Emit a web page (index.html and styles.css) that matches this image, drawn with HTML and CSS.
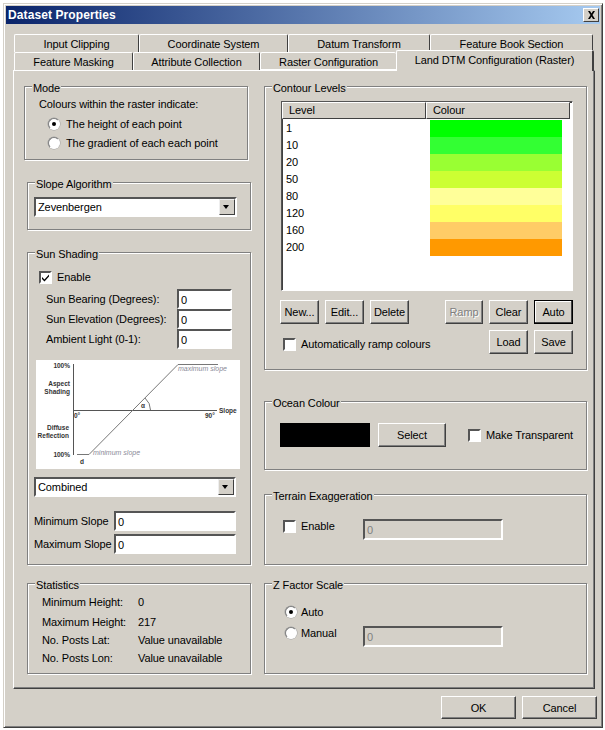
FILE: index.html
```html
<!DOCTYPE html>
<html>
<head>
    <meta name="viewport" content="width=device-width, initial-scale=1.0">
    <title>Dataset Properties</title>
    <link rel="stylesheet" href="styles.css">
</head>
<body>
    <div class="window">
        <!-- Title bar -->
        <div class="titlebar">
            <span class="title">Dataset Properties</span>
            <span class="close-btn">
                <svg width="9" height="8" viewBox="0 0 9 8"><path d="M1 0h2l1.500 2.500L6 0h2L5.500 4 8 8H6L4.500 5.500 3 8H1l2.500-4z" fill="#000"/></svg>
            </span>
        </div>

        <!-- Tabs -->
        <div class="tabs">
            <div class="tab-row">
                <div class="tab t1">Input Clipping</div>
                <div class="tab t2">Coordinate System</div>
                <div class="tab t3">Datum Transform</div>
                <div class="tab t4">Feature Book Section</div>
            </div>
            <div class="tab-row">
                <div class="tab t5">Feature Masking</div>
                <div class="tab t6">Attribute Collection</div>
                <div class="tab t7">Raster Configuration</div>
                <div class="tab active-tab">Land DTM Configuration (Raster)</div>
            </div>
        </div>

        <div class="panel">
            <div class="col col-left">
                <fieldset class="group mode-group">
                    <legend>Mode</legend>
                    <p class="mode-caption">Colours within the raster indicate:</p>
                    <label class="option mode-option"><span class="radio checked"></span>The height of each point</label>
                    <label class="option mode-option"><span class="radio"></span>The gradient of each each point</label>
                </fieldset>

                <fieldset class="group slope-group">
                    <legend>Slope Algorithm</legend>
                    <div class="select">
                        <span class="select-value">Zevenbergen</span>
                        <span class="select-arrow"></span>
                    </div>
                </fieldset>

                <fieldset class="group sun-group">
                    <legend>Sun Shading</legend>
                    <label class="option sun-enable"><span class="check checked">
                        <svg width="9" height="9" viewBox="0 0 9 9"><path d="M1 4l2.500 2.500L8 1.500v2L3.500 8.500 1 6z" fill="#000"/></svg>
                    </span>Enable</label>
                    <div class="field-row"><span class="field-label">Sun Bearing (Degrees):</span><span class="input small">0</span></div>
                    <div class="field-row"><span class="field-label">Sun Elevation (Degrees):</span><span class="input small">0</span></div>
                    <div class="field-row"><span class="field-label">Ambient Light (0-1):</span><span class="input small">0</span></div>

                    <svg class="chart" width="204" height="109" viewBox="0 0 204 109">
                        <rect width="204" height="109" fill="#fff"/>
                        <path d="M37.500 4v91M37 50.500h144" stroke="#555" fill="none"/>
                        <path d="M41 94.500h12L142 4.500h40" stroke="#777" fill="none"/>
                        <path d="M109 38q5.500 5 5.500 12" stroke="#777" fill="none"/>
                        <g class="chart-label">
                            <text x="34" y="8" text-anchor="end">100%</text>
                            <text x="34" y="26" text-anchor="end">Aspect</text>
                            <text x="34" y="34" text-anchor="end">Shading</text>
                            <text x="38" y="58">0°</text>
                            <text x="169" y="58">90°</text>
                            <text x="183" y="53">Slope</text>
                            <text x="33" y="70" text-anchor="end">Diffuse</text>
                            <text x="33" y="78" text-anchor="end">Reflection</text>
                            <text x="34" y="97" text-anchor="end">100%</text>
                            <text x="44" y="104">d</text>
                            <text x="105" y="48">α</text>
                        </g>
                        <text class="chart-note" x="142" y="11">maximum slope</text>
                        <text class="chart-note" x="57" y="95">minimum slope</text>
                    </svg>

                    <div class="select combined">
                        <span class="select-value">Combined</span>
                        <span class="select-arrow"></span>
                    </div>
                    <div class="field-row slope-row"><span class="field-label">Minimum Slope</span><span class="input wide">0</span></div>
                    <div class="field-row slope-row"><span class="field-label">Maximum Slope</span><span class="input wide">0</span></div>
                </fieldset>

                <fieldset class="group stats-group">
                    <legend>Statistics</legend>
                    <div class="stat stat-first"><span class="stat-name">Minimum Height:</span><span>0</span></div>
                    <div class="stat"><span class="stat-name">Maximum Height:</span><span>217</span></div>
                    <div class="stat"><span class="stat-name">No. Posts Lat:</span><span>Value unavailable</span></div>
                    <div class="stat"><span class="stat-name">No. Posts Lon:</span><span>Value unavailable</span></div>
                </fieldset>
            </div>

            <div class="col col-right">
                <fieldset class="group contour-group">
                    <legend>Contour Levels</legend>
                    <div class="list">
                        <div class="list-head">
                            <span class="head-cell head-level">Level</span>
                            <span class="head-cell head-colour">Colour</span>
                        </div>
                        <div class="list-row"><span class="level">1</span><span class="swatch c1"></span></div>
                        <div class="list-row"><span class="level">10</span><span class="swatch c2"></span></div>
                        <div class="list-row"><span class="level">20</span><span class="swatch c3"></span></div>
                        <div class="list-row"><span class="level">50</span><span class="swatch c4"></span></div>
                        <div class="list-row"><span class="level">80</span><span class="swatch c5"></span></div>
                        <div class="list-row"><span class="level">120</span><span class="swatch c6"></span></div>
                        <div class="list-row"><span class="level">160</span><span class="swatch c7"></span></div>
                        <div class="list-row"><span class="level">200</span><span class="swatch c8"></span></div>
                    </div>
                    <div class="list-actions">
                        <div class="action-row">
                            <button class="btn">New...</button>
                            <button class="btn">Edit...</button>
                            <button class="btn">Delete</button>
                            <button class="btn disabled ramp">Ramp</button>
                            <button class="btn">Clear</button>
                            <button class="btn default">Auto</button>
                        </div>
                        <div class="action-row second">
                            <label class="option ramp-check"><span class="check"></span>Automatically ramp colours</label>
                            <button class="btn">Load</button>
                            <button class="btn">Save</button>
                        </div>
                    </div>
                </fieldset>

                <fieldset class="group ocean-group">
                    <legend>Ocean Colour</legend>
                    <div class="ocean-row">
                        <span class="ocean-swatch"></span>
                        <button class="btn select-btn">Select</button>
                        <label class="option transparent"><span class="check"></span>Make Transparent</label>
                    </div>
                </fieldset>

                <fieldset class="group terrain-group">
                    <legend>Terrain Exaggeration</legend>
                    <div class="control-row">
                        <label class="option control-label"><span class="check"></span>Enable</label>
                        <span class="input off">0</span>
                    </div>
                </fieldset>

                <fieldset class="group zfactor-group">
                    <legend>Z Factor Scale</legend>
                    <label class="option z-auto"><span class="radio checked"></span>Auto</label>
                    <div class="control-row">
                        <label class="option control-label"><span class="radio"></span>Manual</label>
                        <span class="input off">0</span>
                    </div>
                </fieldset>
            </div>
        </div>

        <!-- Dialog buttons -->
        <div class="dialog-buttons">
            <button class="btn dialog-btn">OK</button>
            <button class="btn dialog-btn">Cancel</button>
        </div>
    </div>
</body>
</html>
```

FILE: styles.css
```css
* {
    box-sizing: border-box;
}

body {
    margin: 0;
    background-color: #fff;
    font-family: "Liberation Sans", Arial, sans-serif;
    font-size: 11px;
    letter-spacing: -0.1px;
    color: #000;
}

/* Window */
.window {
    width: 600px;
    height: 725px;
    margin: 3px 0 0 3px;
    background-color: #d4d0c8;
    border: 1px solid;
    border-color: #d4d0c8 #404040 #404040 #d4d0c8;
    box-shadow: inset 1px 1px 0 #fff, inset -1px -1px 0 #808080;
    padding: 2px;
}

.titlebar {
    height: 18px;
    display: flex;
    align-items: center;
    justify-content: space-between;
    padding: 0 1px 0 2px;
    background: linear-gradient(to right, #0a246a, #a6caf0);
}

.title {
    color: #fff;
    font-weight: bold;
    font-size: 12px;
    letter-spacing: 0.1px;
}

.close-btn {
    width: 16px;
    height: 14px;
    display: flex;
    align-items: center;
    justify-content: center;
    background-color: #d4d0c8;
    border: 1px solid;
    border-color: #fff #404040 #404040 #fff;
}

/* Tabs */
.tabs {
    margin: 10px 0 0 7px;
    height: 36px;
}

.tab-row {
    display: flex;
    height: 18px;
}

.tab {
    height: 18px;
    background-color: #d4d0c8;
    border-top: 1px solid #fff;
    border-left: 1px solid #fff;
    border-right: 1px solid #404040;
    border-top-left-radius: 2px;
    border-top-right-radius: 2px;
    text-align: center;
    line-height: 19px;
    white-space: nowrap;
}

.t1 { width: 125px; margin-left: 1px; }
.t2 { width: 149px; }
.t3 { width: 142px; }
.t4 { width: 163px; }
.t5 { width: 119px; margin-left: 1px; }
.t6 { width: 127px; }
.t7 { width: 136px; border-right: none; border-bottom: 1px solid #fff; }

.active-tab {
    width: 198px;
    height: 21px;
    margin-top: -2px;
    position: relative;
    z-index: 1;
    border-right: 2px solid #404040;
    line-height: 18px;
}

/* Main panel */
.panel {
    width: 582px;
    height: 619px;
    margin-left: 7px;
    border: 1px solid;
    border-color: #fff #404040 #404040 #fff;
    box-shadow: inset -1px -1px 0 #808080;
    display: flex;
    padding: 15px 0 0 10px;
}

.col {
    display: flex;
    flex-direction: column;
}

.col-left {
    width: 240px;
}

.col-right {
    width: 323px;
}

/* Group boxes */
.group {
    position: relative;
    margin: 0;
    padding: 0;
    min-width: 0;
    border: 1px solid #808080;
    box-shadow: 1px 1px 0 #fff, inset 1px 1px 0 #fff;
}

.group legend {
    position: absolute;
    top: -6px;
    left: 7px;
    padding: 0 1px;
    height: 14px;
    line-height: 14px;
    background-color: #d4d0c8;
}

.mode-group { width: 224px; height: 74px; padding: 10px 0 0 14px; }
.slope-group { width: 224px; height: 48px; margin: 22px 0 0 3px; padding: 14px 0 0 6px; }
.sun-group { width: 224px; height: 313px; margin: 22px 0 0 3px; padding: 16px 0 0 8px; }
.stats-group { width: 224px; height: 91px; margin: 18px 0 0 3px; padding: 9px 0 0 14px; }

.contour-group { width: 323px; height: 284px; padding: 14px 0 0 16px; }
.ocean-group { width: 323px; height: 69px; margin-top: 31px; padding: 21px 0 0 15px; }
.terrain-group { width: 323px; height: 71px; margin-top: 24px; padding: 24px 0 0 18px; }
.zfactor-group { width: 323px; height: 91px; margin-top: 18px; padding: 21px 0 0 20px; }

/* Form bits */
.option {
    display: flex;
    align-items: center;
    height: 14px;
    white-space: nowrap;
}

.radio {
    width: 12px;
    height: 12px;
    flex: none;
    margin-right: 4px;
    border-radius: 50%;
    background-color: #fff;
    border: 1px solid;
    border-color: #808080 #fff #fff #808080;
    box-shadow: 0 0 0 0.5px #a0a0a0;
    position: relative;
}

.radio.checked::after {
    content: "";
    position: absolute;
    left: 3px;
    top: 3px;
    width: 4px;
    height: 4px;
    border-radius: 50%;
    background-color: #000;
}

.check {
    width: 13px;
    height: 13px;
    flex: none;
    margin-right: 5px;
    background-color: #fff;
    border: 2px solid;
    border-color: #555 #fff #fff #555;
    display: flex;
    align-items: center;
    justify-content: center;
}

.check svg {
    flex: none;
}

.input {
    display: block;
    height: 20px;
    flex: none;
    padding: 2px 0 0 2px;
    background-color: #fff;
    border: 2px solid;
    border-color: #555 #fff #fff #555;
    line-height: 15px;
}

.input.off {
    width: 140px;
    height: 21px;
    background-color: #d4d0c8;
    color: #808080;
}

.input.small { width: 55px; }
.input.wide { width: 122px; }

.select {
    height: 20px;
    display: flex;
    align-items: center;
    justify-content: space-between;
    background-color: #fff;
    border: 2px solid;
    border-color: #555 #fff #fff #555;
    padding-left: 2px;
}

.slope-group .select { width: 203px; }
.combined { width: 202px; margin: 8px 0 0 -2px; }

.select-arrow {
    width: 16px;
    height: 16px;
    background-color: #d4d0c8;
    border: 1px solid;
    border-color: #eee #404040 #404040 #eee;
    position: relative;
}

.select-arrow::after {
    content: "";
    position: absolute;
    left: 3px;
    top: 5px;
    border-style: solid;
    border-width: 4px 3.500px 0 3.500px;
    border-color: #000 transparent transparent transparent;
}

.btn {
    padding: 0;
    font-family: inherit;
    font-size: 11px;
    letter-spacing: inherit;
    color: #000;
    background-color: #d4d0c8;
    border: 1px solid;
    border-color: #fff #404040 #404040 #fff;
    box-shadow: inset -1px -1px 0 #808080;
}

/* Mode */
.mode-caption {
    margin: 0 0 6px 0;
    line-height: 14px;
}

.mode-option {
    margin: 0 0 5px 9px;
}

.mode-option .radio {
    margin-right: 6px;
}

/* Sun shading */
.sun-enable {
    margin: 1px 0 5px 3px;
}

.field-row {
    display: flex;
    align-items: center;
    justify-content: space-between;
    width: 196px;
    height: 20px;
}

.field-label {
    margin-left: 10px;
    white-space: nowrap;
}

.chart {
    display: block;
    margin-top: 11px;
}

.chart-label {
    font-size: 6.500px;
    font-weight: bold;
    letter-spacing: 0;
    fill: #333;
}

.chart-note {
    font-size: 7px;
    font-style: italic;
    letter-spacing: 0;
    fill: #8a8a98;
}

.slope-row {
    width: 202px;
    margin: 3px 0 0 -2px;
}

.slope-row .field-label {
    margin-left: 0;
}

.combined + .slope-row {
    margin-top: 14px;
}

/* Statistics */
.stat {
    display: flex;
    height: 18px;
    align-items: center;
    white-space: nowrap;
}

.stat-first {
    margin-bottom: 2px;
}

.stat-name {
    width: 96px;
}

/* Contour list */
.list {
    width: 292px;
    height: 190px;
    background-color: #fff;
    border: 1px solid;
    border-color: #555 #fff #fff #555;
    box-shadow: inset 1px 1px 0 #404040;
}

.list-head {
    display: flex;
    height: 17px;
    margin-bottom: 1px;
}

.head-cell {
    background-color: #d4d0c8;
    border: 1px solid;
    border-color: #fff #404040 #404040 #fff;
    padding-left: 6px;
    line-height: 15px;
}

.head-level { width: 144px; }
.head-colour { width: 144px; }

.list-row {
    display: flex;
    height: 17px;
}

.level {
    width: 148px;
    padding-left: 4px;
    line-height: 17px;
}

.swatch {
    width: 132px;
    height: 17px;
}

.c1 { background-color: #00ff00; }
.c2 { background-color: #33ff33; }
.c3 { background-color: #99ff33; }
.c4 { background-color: #ccff33; }
.c5 { background-color: #ffff99; }
.c6 { background-color: #ffff66; }
.c7 { background-color: #ffcc66; }
.c8 { background-color: #ff9900; }

.list-actions {
    width: 293px;
    margin: 9px 0 0 -1px;
}

.action-row {
    display: flex;
}

.action-row .btn {
    width: 39px;
    height: 24px;
    margin-right: 6px;
}

.action-row .btn:last-child {
    margin-right: 0;
}

.action-row .ramp {
    width: 38px;
    margin-left: 30px;
}

.btn.disabled {
    color: #808080;
    text-shadow: 1px 1px 0 #fff;
}

.btn.default {
    border: 1px solid #000;
    box-shadow: inset -1px -1px 0 #404040, inset 1px 1px 0 #fff;
}

.action-row.second {
    margin-top: 6px;
    align-items: center;
}

.ramp-check {
    margin: 4px auto 0 3px;
}

/* Ocean */
.ocean-row {
    display: flex;
    align-items: center;
}

.ocean-swatch {
    width: 90px;
    height: 24px;
    background-color: #000;
}

.select-btn {
    width: 68px;
    height: 24px;
    margin-left: 8px;
}

.transparent {
    margin-left: 22px;
}

/* Terrain and Z factor */
.control-row {
    display: flex;
    align-items: flex-start;
}

.control-label {
    width: 80px;
}

.zfactor-group .control-label {
    width: 78px;
}

.z-auto {
    margin-bottom: 7px;
}

/* Bottom buttons */
.dialog-buttons {
    display: flex;
    justify-content: flex-end;
    gap: 6px;
    margin-top: 7px;
    padding-right: 3px;
}

.dialog-btn {
    width: 75px;
    height: 23px;
}
```
